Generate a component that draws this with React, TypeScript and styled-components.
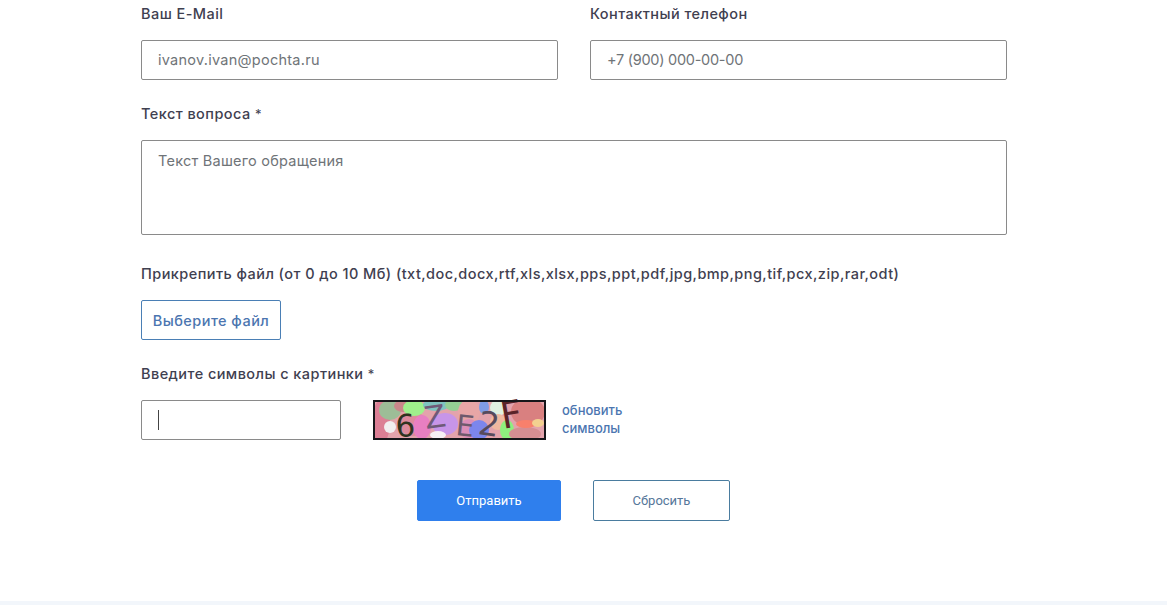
import styled, { createGlobalStyle } from 'styled-components';

const GlobalStyle = createGlobalStyle`
  html, body {
    margin: 0;
    padding: 0;
    background: #fff;
    overflow: hidden;
  }
  * {
    box-sizing: border-box;
  }
`;

const Page = styled.div`
  width: 1167px;
  height: 605px;
  display: flex;
  flex-direction: column;
  font-family: Inter, "Noto Sans", "Liberation Sans", sans-serif;
`;

const Form = styled.form`
  width: 866px;
  margin-left: 141px;
  padding-top: 4px;
  display: flex;
  flex-direction: column;
  gap: 24px;
`;

const Columns = styled.div`
  display: grid;
  grid-template-columns: 417px 417px;
  column-gap: 32px;
`;

const Field = styled.div<{ $offset?: number }>`
  display: flex;
  flex-direction: column;
  gap: 16px;
  margin-top: ${({ $offset }) => $offset ?? 0}px;
`;

const Label = styled.label`
  display: block;
  height: 20px;
  font-size: 14.5px;
  line-height: 20px;
  font-weight: 500;
  letter-spacing: 0.44px;
  color: #3f4050;
  white-space: nowrap;
`;

const Required = styled.span`
  font-size: 13px;
  font-weight: 400;
`;

const Input = styled.input<{ $spacing?: number }>`
  display: block;
  width: 100%;
  height: 40px;
  padding: 0 16px 2px;
  border: 1px solid #8a8a8a;
  border-radius: 2px;
  background: #fff;
  font: 400 14.5px Inter, "Noto Sans", sans-serif;
  letter-spacing: ${({ $spacing }) => $spacing ?? 0.26}px;
  color: #3f4050;
  outline: none;

  &::placeholder {
    color: #6f7478;
    opacity: 1;
  }
`;

const TextArea = styled.textarea`
  display: block;
  width: 100%;
  height: 95px;
  padding: 11px 16px;
  border: 1px solid #8a8a8a;
  border-radius: 2px;
  background: #fff;
  font: 400 14.5px/18px Inter, "Noto Sans", sans-serif;
  letter-spacing: 0.24px;
  resize: none;
  outline: none;

  &::placeholder {
    color: #6f7478;
    opacity: 1;
  }
`;

const FileButton = styled.button`
  width: 140px;
  height: 40px;
  padding: 0;
  border: 1px solid #4a7fb5;
  border-radius: 2px;
  background: #fff;
  font: 500 14.5px Inter, "Noto Sans", sans-serif;
  letter-spacing: 0.46px;
  color: #4b75b0;
`;

const CaptchaRow = styled.div`
  display: flex;
  align-items: center;
`;

const CaptchaInputWrap = styled.div`
  position: relative;
  width: 200px;
  height: 40px;
  margin-right: 32px;
`;

const Caret = styled.span`
  position: absolute;
  left: 17px;
  top: 10px;
  width: 1px;
  height: 20px;
  background: #444;
`;

const CaptchaImage = styled.svg`
  display: block;
  width: 173px;
  height: 40px;
  margin-right: 16px;
  overflow: visible;
`;

const RefreshLink = styled.a`
  width: 70px;
  padding-bottom: 2px;
  font-size: 13px;
  line-height: 18px;
  font-weight: 500;
  color: #4b75b0;
`;

const Actions = styled.div`
  display: flex;
  gap: 32px;
  margin-top: 16px;
  margin-left: 276px;
`;

const ActionButton = styled.button<{ $primary?: boolean }>`
  width: ${({ $primary }) => ($primary ? '144px' : '137px')};
  height: 41px;
  padding: 0;
  border: 1px solid ${({ $primary }) => ($primary ? '#2f7fed' : '#4a7c9f')};
  border-radius: 2px;
  background: ${({ $primary }) => ($primary ? '#2f7fed' : '#fff')};
  color: ${({ $primary }) => ($primary ? '#fff' : '#56779a')};
  font: 400 13px Roboto, "Liberation Sans", sans-serif;
`;

const FooterStrip = styled.div`
  margin-top: 80px;
  flex: 1;
  background: #f2f6fb;
`;

// cx, cy, rx, ry, fill: the coloured noise behind the captcha letters
const blobs: [number, number, number, number, string][] = [
  [8, 22, 9, 22, '#dc7f95'],
  [17, 10, 11, 10, '#9dbd97'],
  [17, 27, 6, 6, '#f1eef0'],
  [30, 6, 9, 6, '#c9878a'],
  [40, 24, 14, 12, '#dd8a9c'],
  [41, 8, 11, 8, '#9ff08c'],
  [49, 27, 9, 12, '#e87fc2'],
  [63, 5, 13, 6, '#7fc4c0'],
  [81, 5, 9, 6, '#94cf94'],
  [96, 12, 11, 12, '#e8a6a6'],
  [96, 29, 10, 10, '#dc8fb8'],
  [72, 24, 13, 11, '#c795e8'],
  [65, 35, 8, 4, '#f7f0f4'],
  [111, 7, 5, 7, '#7f9ce6'],
  [106, 30, 10, 10, '#7c86ec'],
  [125, 8, 8, 8, '#dff0e0'],
  [125, 22, 8, 8, '#f0b9a0'],
  [134, 30, 7, 10, '#8fee7f'],
  [155, 12, 17, 14, '#d98080'],
  [152, 34, 16, 7, '#d58e92'],
  [153, 24, 10, 4, '#f8806c'],
  [165, 23, 6, 4, '#f3d090'],
];

// char, x, baseline, rotation, fill, font size
const glyphs: [string, number, number, number, string, number][] = [
  ['6', 23, 37, -3, '#30331f', 31],
  ['Z', 53, 29, -8, '#6f5a78', 31],
  ['E', 82, 35, 6, '#6e5a6c', 29],
  ['2', 104, 34, 8, '#574a5c', 33],
  ['F', 130, 29, -10, '#5a2328', 37],
];

const Captcha = () => (
  <CaptchaImage viewBox="0 0 173 40">
    <defs>
      <clipPath id="captcha-clip">
        <rect width="173" height="40" />
      </clipPath>
    </defs>
    <g clipPath="url(#captcha-clip)">
      <rect width="173" height="40" fill="#e3a3ac" />
      {blobs.map(([cx, cy, rx, ry, fill]) => (
        <ellipse key={`${cx}-${cy}`} cx={cx} cy={cy} rx={rx} ry={ry} fill={fill} />
      ))}
    </g>
    {glyphs.map(([ch, x, y, rotate, fill, size]) => (
      <text
        key={ch + x}
        x={x}
        y={y}
        fill={fill}
        fontSize={size}
        fontFamily="'DejaVu Sans', sans-serif"
        transform={`rotate(${rotate} ${x} ${y})`}
      >
        {ch}
      </text>
    ))}
    <rect x="1" y="1" width="171" height="38" fill="none" stroke="#16161a" strokeWidth="2" />
  </CaptchaImage>
);

const App = () => {
  return (
    <Page>
      <GlobalStyle />
      <Form>
        <Columns>
          <Field>
            <Label>Ваш E-Mail</Label>
            <Input placeholder="ivanov.ivan@pochta.ru" />
          </Field>
          <Field>
            <Label>Контактный телефон</Label>
            <Input placeholder="+7 (900) 000-00-00" $spacing={-0.27} />
          </Field>
        </Columns>
        <Field>
          <Label>Текст вопроса <Required>*</Required></Label>
          <TextArea placeholder="Текст Вашего обращения" />
        </Field>
        <Field $offset={5}>
          <Label>Прикрепить файл (от 0 до 10 Мб) (txt,doc,docx,rtf,xls,xlsx,pps,ppt,pdf,jpg,bmp,png,tif,pcx,zip,rar,odt)</Label>
          <FileButton type="button">Выберите файл</FileButton>
        </Field>
        <Field>
          <Label>Введите символы с картинки <Required>*</Required></Label>
          <CaptchaRow>
            <CaptchaInputWrap>
              <Input />
              <Caret />
            </CaptchaInputWrap>
            <Captcha />
            <RefreshLink>обновить символы</RefreshLink>
          </CaptchaRow>
        </Field>
        <Actions>
          <ActionButton type="button" $primary>Отправить</ActionButton>
          <ActionButton type="button">Сбросить</ActionButton>
        </Actions>
      </Form>
      <FooterStrip />
    </Page>
  );
};

export default App;
